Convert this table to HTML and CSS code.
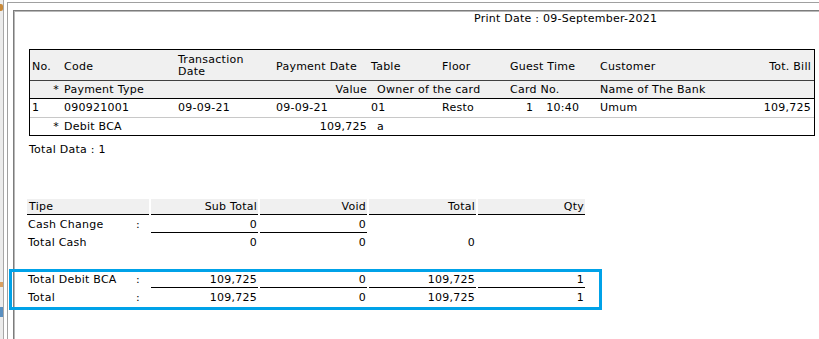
FILE: index.html
```html
<!DOCTYPE html>
<html>
<head>
<meta charset="utf-8">
<title>Report</title>
<link rel="stylesheet" href="styles.css">
</head>
<body>
<div class="app">
  <div class="rail">
    <span class="ico ico-top"></span>
    <span class="ico ico-mid"></span>
    <span class="ico ico-bot"></span>
  </div>
  <div class="outer">
    <div class="page">
      <div class="print-date">Print Date : 09-September-2021</div>

      <div class="report">
        <div class="row h1">
          <div class="c">No.</div>
          <div class="c">Code</div>
          <div class="c two">Transaction<br>Date</div>
          <div class="c">Payment Date</div>
          <div class="c">Table</div>
          <div class="c">Floor</div>
          <div class="c">Guest Time</div>
          <div class="c">Customer</div>
          <div class="c r">Tot. Bill</div>
        </div>
        <div class="row h2">
          <div class="c star">*</div>
          <div class="c span2">Payment Type</div>
          <div class="c r">Value</div>
          <div class="c span2 sub">Owner of the card</div>
          <div class="c">Card No.</div>
          <div class="c span2">Name of The Bank</div>
        </div>
        <div class="row d1">
          <div class="c">1</div>
          <div class="c">090921001</div>
          <div class="c">09-09-21</div>
          <div class="c">09-09-21</div>
          <div class="c">01</div>
          <div class="c">Resto</div>
          <div class="c guest"><span>1</span><span>10:40</span></div>
          <div class="c">Umum</div>
          <div class="c r">109,725</div>
        </div>
        <div class="row d2">
          <div class="c star">*</div>
          <div class="c span2">Debit BCA</div>
          <div class="c r">109,725</div>
          <div class="c span2 sub">a</div>
        </div>
      </div>

      <div class="total-data">Total Data : 1</div>

      <div class="summary">
        <div class="srow head">
          <div class="s lab">Tipe</div>
          <div class="s num">Sub Total</div>
          <div class="s num">Void</div>
          <div class="s num">Total</div>
          <div class="s num">Qty</div>
        </div>
        <div class="srow">
          <div class="s lab"><span>Cash Change</span><span>:</span></div>
          <div class="s num line">0</div>
          <div class="s num line">0</div>
          <div class="s num"></div>
          <div class="s num"></div>
        </div>
        <div class="srow">
          <div class="s lab"><span>Total Cash</span><span></span></div>
          <div class="s num">0</div>
          <div class="s num">0</div>
          <div class="s num">0</div>
          <div class="s num"></div>
        </div>
        <div class="srow blank"></div>
        <div class="srow">
          <div class="s lab"><span>Total Debit BCA</span><span>:</span></div>
          <div class="s num line">109,725</div>
          <div class="s num line">0</div>
          <div class="s num line">109,725</div>
          <div class="s num line">1</div>
        </div>
        <div class="srow">
          <div class="s lab"><span>Total</span><span>:</span></div>
          <div class="s num">109,725</div>
          <div class="s num">0</div>
          <div class="s num">109,725</div>
          <div class="s num">1</div>
        </div>
      </div>
    </div>
  </div>
  <div class="highlight"></div>
</div>
</body>
</html>
```

FILE: styles.css
```css
* { box-sizing: content-box; }
html, body { margin: 0; padding: 0; background: #ffffff; }
body {
  font-family: "DejaVu Sans", Verdana, sans-serif;
  font-size: 11px;
  letter-spacing: 0.25px;
  color: #000;
}
.app {
  position: relative;
  display: flex;
  width: 819px;
  height: 339px;
  overflow: hidden;
  background: #ffffff;
}
.rail {
  width: 3px;
  flex: none;
  background: #ececec;
  border-right: 1px solid #a8a8a8;
  display: flex;
  flex-direction: column;
}
.ico { display: block; width: 3px; }
.ico-top { margin-top: 4px; height: 7px; background: #c98a3a; border-radius: 0 2px 2px 0; }
.ico-mid { margin-top: 271px; height: 5px; background: #d9a060; }
.ico-bot { margin-top: 20px; height: 10px; background: #5a8fc0; }
.outer {
  flex: 1;
  margin-left: 3px;
  margin-top: 2px;
  border-left: 1px solid #a0a0a0;
  border-top: 1px solid #a0a0a0;
  padding-left: 5px;
  padding-top: 7px;
}
.page {
  height: 100%;
  border-left: 1px solid #7c7c7c;
  border-top: 1px solid #7c7c7c;
  box-shadow: inset 1px 1px 0 #b8b8b8;
  padding-top: 1px;
}
.print-date {
  margin-left: 460px;
  line-height: 13px;
  white-space: nowrap;
}
.report {
  margin-top: 24px;
  margin-left: 15px;
  width: 784px;
  border: 1px solid #000;
}
.row {
  display: grid;
  grid-template-columns: 32px 114px 98px 95px 71px 68px 90px 110px 106px;
  align-items: center;
}
.c { padding-left: 2px; white-space: nowrap; }
.c.r { text-align: right; padding-left: 0; padding-right: 3px; }
.row .c.r:nth-child(3) { padding-right: 2px; }
.c.star { text-align: right; padding-left: 0; padding-right: 3px; }
.c.span2 { grid-column: span 2; }
.c.sub { padding-left: 8px; }
.two { line-height: 12px; }
.h1 {
  height: 28px;
  padding-top: 2px;
  background: #f0f0f0;
  border-bottom: 1px solid #404040;
  line-height: 13px;
}
.h2 {
  height: 17px;
  line-height: 17px;
  background: #f0f0f0;
  border-bottom: 1px solid #000;
}
.d1 {
  height: 18px;
  line-height: 18px;
  border-bottom: 1px solid #c8c8c8;
}
.d2 {
  height: 17px;
  line-height: 17px;
}
.d2 .c.r { padding-right: 2px; }
.guest { display: flex; gap: 13px; padding-left: 18px; }
.total-data {
  margin-top: 7px;
  margin-left: 15px;
  line-height: 13px;
}
.summary {
  margin-top: 43px;
  margin-left: 13px;
  display: flex;
  flex-direction: column;
}
.srow {
  display: grid;
  grid-template-columns: 122px 107px 107px 107px 107px;
  column-gap: 2px;
  width: max-content;
}
.s {
  height: 15px;
  padding-top: 2px;
  line-height: 15px;
  border-bottom: 1px solid transparent;
  white-space: nowrap;
}
.s.num { text-align: right; padding-right: 1px; }
.s.lab { display: grid; grid-template-columns: 108px auto; padding-left: 1px; }
.s.line { border-bottom-color: #000; }
.head .s {
  height: 15px;
  padding-top: 0;
  background: #f0f0f0;
  border-bottom: 1px solid #000;
}
.head .s.lab { display: block; padding-left: 2px; }
.srow.blank { height: 19px; }
.highlight {
  position: absolute;
  left: 9px;
  top: 269px;
  width: 587px;
  height: 35px;
  border: 3px solid #00a2e8;
  pointer-events: none;
}
```
